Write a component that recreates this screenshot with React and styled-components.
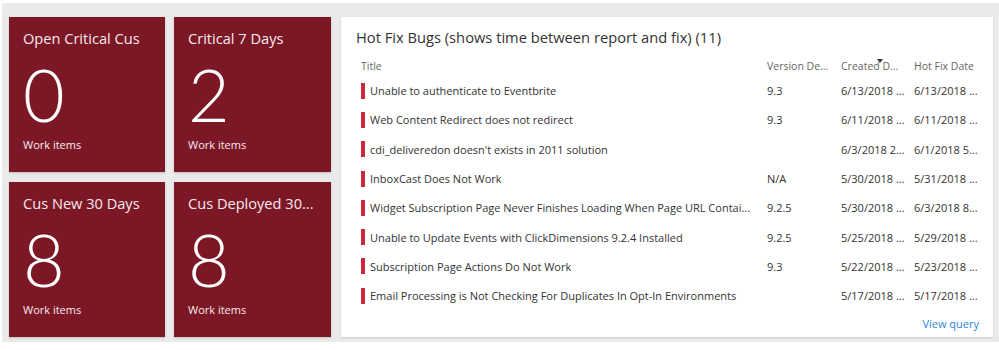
import styled, { createGlobalStyle } from "styled-components";

const GlobalStyle = createGlobalStyle`
  body {
    margin: 0;
    background: #ffffff;
    font-family: "Open Sans", "Liberation Sans", sans-serif;
  }
`;

const Board = styled.div`
  margin: 3px 0 8px 2px;
  background-color: #eaeaea;
  padding: 14px 7px 5px 7px;
  display: flex;
  gap: 10px;
`;

const TileGrid = styled.div`
  display: grid;
  grid-template-columns: 156px 157px;
  grid-template-rows: 155px 155px;
  column-gap: 9px;
  row-gap: 10px;
`;

const Tile = styled.div`
  background-color: #7c1826;
  color: #f6e9ee;
  padding: 10px 14px 0 14px;
  display: flex;
  flex-direction: column;
  box-shadow: 0 1px 2px rgba(0, 0, 0, 0.18);
  overflow: hidden;
`;

const TileTitle = styled.div`
  font-size: 14.6px;
  line-height: 22px;
  white-space: nowrap;
  overflow: hidden;
  text-overflow: ellipsis;
`;

const TileCount = styled.div`
  font-family: Lato, "Open Sans", sans-serif;
  font-size: 72px;
  font-weight: 300;
  line-height: 64px;
  margin-top: 12.7px;
  color: #ffffff;
`;

const TileFooter = styled.div`
  font-size: 11px;
  line-height: 14px;
  margin-top: 12.5px;
`;

const Panel = styled.div`
  flex: 1;
  background-color: #ffffff;
  box-shadow: 0 1px 2px rgba(0, 0, 0, 0.15);
  padding: 9px 12px 0 15px;
  display: flex;
  flex-direction: column;
`;

const PanelTitle = styled.div`
  font-size: 14.7px;
  line-height: 22px;
  color: #333333;
`;

const Table = styled.div`
  margin-top: 8px;
  padding-left: 5px;
  display: flex;
  flex-direction: column;
`;

const Row = styled.div`
  display: grid;
  grid-template-columns: 406px 74px 73px 67px;
  align-items: center;
  height: ${(p) => (p.$head ? "20px" : "29.3px")};
  font-size: ${(p) => (p.$head ? "10.5px" : "11px")};
  color: ${(p) => (p.$head ? "#666666" : "#333333")};
`;

const Cell = styled.div`
  position: relative;
  white-space: nowrap;
  overflow: hidden;
  text-overflow: ellipsis;
`;

const TitleCell = styled(Cell)`
  display: flex;
  align-items: center;
  gap: 5px;
`;

const Bar = styled.span`
  flex: none;
  width: 4px;
  height: 16px;
  background-color: #cc293d;
`;

const SortMark = styled.span`
  position: absolute;
  left: 36px;
  top: 0;
  width: 0;
  height: 0;
  border-left: 3px solid transparent;
  border-right: 3px solid transparent;
  border-top: 4px solid #333333;
`;

const Footer = styled.div`
  display: flex;
  justify-content: flex-end;
  margin-top: 6px;
  padding-right: 2px;
`;

const Link = styled.a`
  font-size: 11px;
  color: #2b88d8;
  text-decoration: none;
`;

const tiles = [
  { title: "Open Critical Cus", count: 0 },
  { title: "Critical 7 Days", count: 2 },
  { title: "Cus New 30 Days", count: 8 },
  { title: "Cus Deployed 30...", count: 8 },
];

const bugs = [
  ["Unable to authenticate to Eventbrite", "9.3", "6/13/2018 ...", "6/13/2018 ..."],
  ["Web Content Redirect does not redirect", "9.3", "6/11/2018 ...", "6/11/2018 ..."],
  ["cdi_deliveredon doesn't exists in 2011 solution", "", "6/3/2018 2...", "6/1/2018 5..."],
  ["InboxCast Does Not Work", "N/A", "5/30/2018 ...", "5/31/2018 ..."],
  ["Widget Subscription Page Never Finishes Loading When Page URL Contai...", "9.2.5", "5/30/2018 ...", "6/3/2018 8..."],
  ["Unable to Update Events with ClickDimensions 9.2.4 Installed", "9.2.5", "5/25/2018 ...", "5/29/2018 ..."],
  ["Subscription Page Actions Do Not Work", "9.3", "5/22/2018 ...", "5/23/2018 ..."],
  ["Email Processing is Not Checking For Duplicates In Opt-In Environments", "", "5/17/2018 ...", "5/17/2018 ..."],
];

const App = () => {
  return (
    <>
      <GlobalStyle />
      <Board>
        <TileGrid>
          {tiles.map((t) => (
            <Tile key={t.title}>
              <TileTitle>{t.title}</TileTitle>
              <TileCount>{t.count}</TileCount>
              <TileFooter>Work items</TileFooter>
            </Tile>
          ))}
        </TileGrid>
        <Panel>
          <PanelTitle>Hot Fix Bugs (shows time between report and fix) (11)</PanelTitle>
          <Table>
            <Row $head>
              <Cell>Title</Cell>
              <Cell>Version De...</Cell>
              <Cell>
                <SortMark />
                Created D...
              </Cell>
              <Cell>Hot Fix Date</Cell>
            </Row>
            {bugs.map((b) => (
              <Row key={b[0]}>
                <TitleCell>
                  <Bar />
                  {b[0]}
                </TitleCell>
                <Cell>{b[1]}</Cell>
                <Cell>{b[2]}</Cell>
                <Cell>{b[3]}</Cell>
              </Row>
            ))}
          </Table>
          <Footer>
            <Link href="#">View query</Link>
          </Footer>
        </Panel>
      </Board>
    </>
  );
};

export default App;
